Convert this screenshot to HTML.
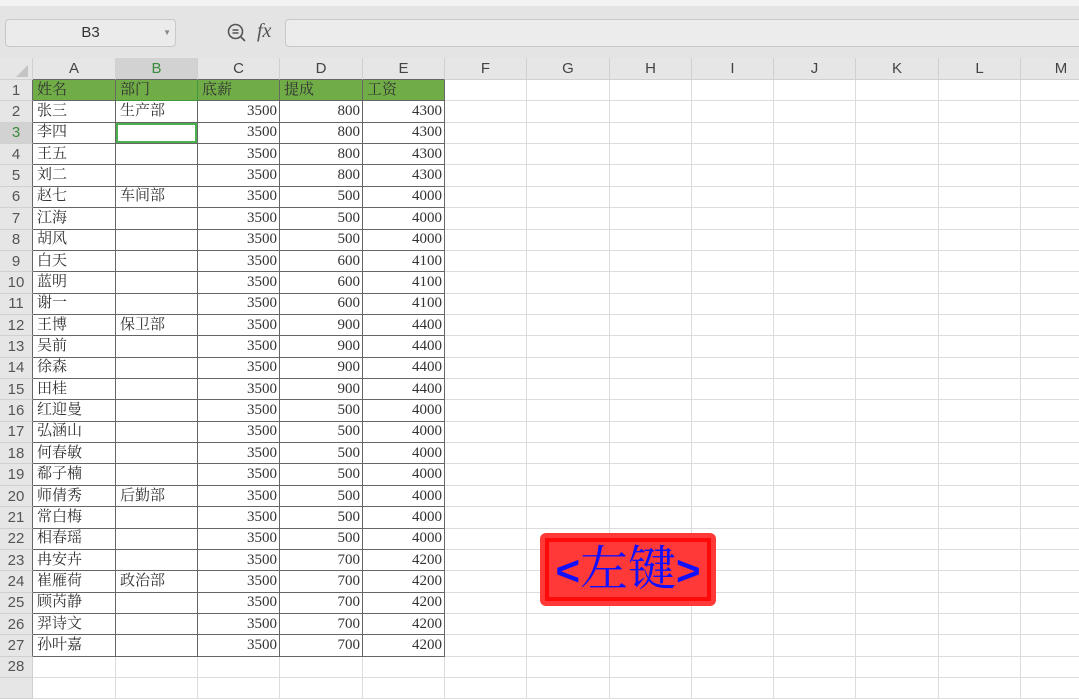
<!DOCTYPE html>
<html><head><meta charset="utf-8">
<style>
body{margin:0;width:1079px;height:682px;overflow:hidden;background:#fff;position:relative;font-family:"Liberation Serif","Noto Serif CJK SC",serif;}
.top{position:absolute;left:0;top:0;width:1079px;height:58px;background:#e4e4e4;}
.strip{position:absolute;left:0;top:0;width:1079px;height:6px;background:#f2f2f2;}
.nb{position:absolute;left:5px;top:19px;width:169px;height:26px;border:1px solid #c8c8c8;border-radius:4px;background:#ebebeb;font:15px "Liberation Sans",sans-serif;color:#333;text-align:center;line-height:26px;}
.nb span{position:absolute;right:4px;top:0;font-size:8px;color:#888;}
.fb{position:absolute;left:285px;top:19px;width:800px;height:26px;border:1px solid #c8c8c8;border-radius:4px;background:#ececec;}
.fx{position:absolute;left:257px;top:20px;font:italic 20px "Liberation Serif",serif;color:#555;}
table{position:absolute;left:0;top:58px;border-collapse:separate;border-spacing:0;table-layout:fixed;width:1102px;}
td{padding:0;border-right:1px solid #dcdcdc;border-bottom:1px solid #dcdcdc;height:21.37px;font-size:15px;color:#333;white-space:nowrap;overflow:hidden;box-sizing:border-box;line-height:19px;vertical-align:middle;}
tr.h td{height:22px;background:#e6e6e6;font:15px "Liberation Sans",sans-serif;color:#444;text-align:center;border-color:#d0d0d0;}
td.r{background:#e6e6e6;font:15px "Liberation Sans",sans-serif;color:#555;text-align:center;border-color:#d0d0d0;}
td.rd{border-right:1px solid #666;}
tr.h td.dk{border-bottom:1px solid #666;}
td.d{border-right:1px solid #666;border-bottom:1px solid #666;padding-left:4px;}
td.n{text-align:right;padding-right:2px;padding-left:0;}
tr.g td.d{background:#70ad47;}
.btn{position:absolute;left:540px;top:533px;width:176px;height:73px;background:#ff3838;border-radius:6px;box-sizing:border-box;padding:5px;}
.btn div{width:100%;height:100%;border:4px solid #ff0a0a;box-sizing:border-box;text-align:center;color:#1010ff;font:48px "Liberation Serif","Noto Serif CJK SC",serif;line-height:56px;white-space:nowrap;}
.btn b{font-family:"Liberation Sans",sans-serif;font-weight:bold;font-size:42px;}
</style></head><body>
<div class="top"><div class="strip"></div></div>
<div class="nb">B3<span>▼</span></div>
<svg style="position:absolute;left:226px;top:22px" width="22" height="22" viewBox="0 0 22 22"><circle cx="9.5" cy="9.5" r="7" fill="none" stroke="#555" stroke-width="1.6"/><path d="M14.5 14.5L19 19M6.5 8h6M6.5 11h6" stroke="#555" stroke-width="1.6" fill="none"/></svg>
<div class="fx">fx</div>
<div class="fb"></div>
<table>
<colgroup><col style="width:33px"><col style="width:83px"><col style="width:82px"><col style="width:82px"><col style="width:83px"><col style="width:82px"><col style="width:82px"><col style="width:83px"><col style="width:82px"><col style="width:82px"><col style="width:82px"><col style="width:83px"><col style="width:82px"><col style="width:81px"></colgroup>
<tr class="h"><td style="background:#e6e6e6"></td><td class="dk">A</td><td class="dk" style="background:#d2d2d2;color:#3a8a3a">B</td><td class="dk">C</td><td class="dk">D</td><td class="dk">E</td><td>F</td><td>G</td><td>H</td><td>I</td><td>J</td><td>K</td><td>L</td><td>M</td></tr>
<tr class="g"><td class="r rd">1</td><td class="d">姓名</td><td class="d" style="border:1px solid #3c9a3c;border-top:none;border-left:none">部门</td><td class="d">底薪</td><td class="d">提成</td><td class="d">工资</td><td></td><td></td><td></td><td></td><td></td><td></td><td></td><td></td></tr>
<tr><td class="r rd">2</td><td class="d">张三</td><td class="d">生产部</td><td class="d n">3500</td><td class="d n">800</td><td class="d n">4300</td><td></td><td></td><td></td><td></td><td></td><td></td><td></td><td></td></tr>
<tr><td class="r rd" style="background:#d2d2d2;color:#3a8a3a">3</td><td class="d">李四</td><td class="d" style="box-shadow:inset 0 0 0 2px #4caf50"></td><td class="d n">3500</td><td class="d n">800</td><td class="d n">4300</td><td></td><td></td><td></td><td></td><td></td><td></td><td></td><td></td></tr>
<tr><td class="r rd">4</td><td class="d">王五</td><td class="d"></td><td class="d n">3500</td><td class="d n">800</td><td class="d n">4300</td><td></td><td></td><td></td><td></td><td></td><td></td><td></td><td></td></tr>
<tr><td class="r rd">5</td><td class="d">刘二</td><td class="d"></td><td class="d n">3500</td><td class="d n">800</td><td class="d n">4300</td><td></td><td></td><td></td><td></td><td></td><td></td><td></td><td></td></tr>
<tr><td class="r rd">6</td><td class="d">赵七</td><td class="d">车间部</td><td class="d n">3500</td><td class="d n">500</td><td class="d n">4000</td><td></td><td></td><td></td><td></td><td></td><td></td><td></td><td></td></tr>
<tr><td class="r rd">7</td><td class="d">江海</td><td class="d"></td><td class="d n">3500</td><td class="d n">500</td><td class="d n">4000</td><td></td><td></td><td></td><td></td><td></td><td></td><td></td><td></td></tr>
<tr><td class="r rd">8</td><td class="d">胡风</td><td class="d"></td><td class="d n">3500</td><td class="d n">500</td><td class="d n">4000</td><td></td><td></td><td></td><td></td><td></td><td></td><td></td><td></td></tr>
<tr><td class="r rd">9</td><td class="d">白天</td><td class="d"></td><td class="d n">3500</td><td class="d n">600</td><td class="d n">4100</td><td></td><td></td><td></td><td></td><td></td><td></td><td></td><td></td></tr>
<tr><td class="r rd">10</td><td class="d">蓝明</td><td class="d"></td><td class="d n">3500</td><td class="d n">600</td><td class="d n">4100</td><td></td><td></td><td></td><td></td><td></td><td></td><td></td><td></td></tr>
<tr><td class="r rd">11</td><td class="d">谢一</td><td class="d"></td><td class="d n">3500</td><td class="d n">600</td><td class="d n">4100</td><td></td><td></td><td></td><td></td><td></td><td></td><td></td><td></td></tr>
<tr><td class="r rd">12</td><td class="d">王博</td><td class="d">保卫部</td><td class="d n">3500</td><td class="d n">900</td><td class="d n">4400</td><td></td><td></td><td></td><td></td><td></td><td></td><td></td><td></td></tr>
<tr><td class="r rd">13</td><td class="d">吴前</td><td class="d"></td><td class="d n">3500</td><td class="d n">900</td><td class="d n">4400</td><td></td><td></td><td></td><td></td><td></td><td></td><td></td><td></td></tr>
<tr><td class="r rd">14</td><td class="d">徐森</td><td class="d"></td><td class="d n">3500</td><td class="d n">900</td><td class="d n">4400</td><td></td><td></td><td></td><td></td><td></td><td></td><td></td><td></td></tr>
<tr><td class="r rd">15</td><td class="d">田桂</td><td class="d"></td><td class="d n">3500</td><td class="d n">900</td><td class="d n">4400</td><td></td><td></td><td></td><td></td><td></td><td></td><td></td><td></td></tr>
<tr><td class="r rd">16</td><td class="d">红迎曼</td><td class="d"></td><td class="d n">3500</td><td class="d n">500</td><td class="d n">4000</td><td></td><td></td><td></td><td></td><td></td><td></td><td></td><td></td></tr>
<tr><td class="r rd">17</td><td class="d">弘涵山</td><td class="d"></td><td class="d n">3500</td><td class="d n">500</td><td class="d n">4000</td><td></td><td></td><td></td><td></td><td></td><td></td><td></td><td></td></tr>
<tr><td class="r rd">18</td><td class="d">何春敏</td><td class="d"></td><td class="d n">3500</td><td class="d n">500</td><td class="d n">4000</td><td></td><td></td><td></td><td></td><td></td><td></td><td></td><td></td></tr>
<tr><td class="r rd">19</td><td class="d">郗子楠</td><td class="d"></td><td class="d n">3500</td><td class="d n">500</td><td class="d n">4000</td><td></td><td></td><td></td><td></td><td></td><td></td><td></td><td></td></tr>
<tr><td class="r rd">20</td><td class="d">师倩秀</td><td class="d">后勤部</td><td class="d n">3500</td><td class="d n">500</td><td class="d n">4000</td><td></td><td></td><td></td><td></td><td></td><td></td><td></td><td></td></tr>
<tr><td class="r rd">21</td><td class="d">常白梅</td><td class="d"></td><td class="d n">3500</td><td class="d n">500</td><td class="d n">4000</td><td></td><td></td><td></td><td></td><td></td><td></td><td></td><td></td></tr>
<tr><td class="r rd">22</td><td class="d">相春瑶</td><td class="d"></td><td class="d n">3500</td><td class="d n">500</td><td class="d n">4000</td><td></td><td></td><td></td><td></td><td></td><td></td><td></td><td></td></tr>
<tr><td class="r rd">23</td><td class="d">冉安卉</td><td class="d"></td><td class="d n">3500</td><td class="d n">700</td><td class="d n">4200</td><td></td><td></td><td></td><td></td><td></td><td></td><td></td><td></td></tr>
<tr><td class="r rd">24</td><td class="d">崔雁荷</td><td class="d">政治部</td><td class="d n">3500</td><td class="d n">700</td><td class="d n">4200</td><td></td><td></td><td></td><td></td><td></td><td></td><td></td><td></td></tr>
<tr><td class="r rd">25</td><td class="d">顾芮静</td><td class="d"></td><td class="d n">3500</td><td class="d n">700</td><td class="d n">4200</td><td></td><td></td><td></td><td></td><td></td><td></td><td></td><td></td></tr>
<tr><td class="r rd">26</td><td class="d">羿诗文</td><td class="d"></td><td class="d n">3500</td><td class="d n">700</td><td class="d n">4200</td><td></td><td></td><td></td><td></td><td></td><td></td><td></td><td></td></tr>
<tr><td class="r rd">27</td><td class="d">孙叶嘉</td><td class="d"></td><td class="d n">3500</td><td class="d n">700</td><td class="d n">4200</td><td></td><td></td><td></td><td></td><td></td><td></td><td></td><td></td></tr>
<tr><td class="r">28</td><td></td><td></td><td></td><td></td><td></td><td></td><td></td><td></td><td></td><td></td><td></td><td></td><td></td></tr>
<tr><td class="r"></td><td></td><td></td><td></td><td></td><td></td><td></td><td></td><td></td><td></td><td></td><td></td><td></td><td></td></tr>
</table>
<svg style="position:absolute;left:15px;top:64px" width="14" height="14"><path d="M13 1V13H1Z" fill="#c4c4c4"/></svg>
<div class="btn"><div><b>&lt;</b>左键<b>&gt;</b></div></div>
</body></html>
